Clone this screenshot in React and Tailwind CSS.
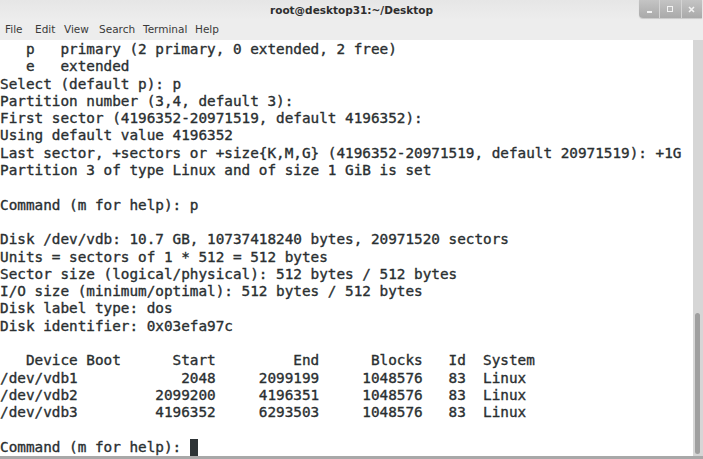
import React from "react";

const lines = [
  "   p   primary (2 primary, 0 extended, 2 free)",
  "   e   extended",
  "Select (default p): p",
  "Partition number (3,4, default 3):",
  "First sector (4196352-20971519, default 4196352):",
  "Using default value 4196352",
  "Last sector, +sectors or +size{K,M,G} (4196352-20971519, default 20971519): +1G",
  "Partition 3 of type Linux and of size 1 GiB is set",
  "",
  "Command (m for help): p",
  "",
  "Disk /dev/vdb: 10.7 GB, 10737418240 bytes, 20971520 sectors",
  "Units = sectors of 1 * 512 = 512 bytes",
  "Sector size (logical/physical): 512 bytes / 512 bytes",
  "I/O size (minimum/optimal): 512 bytes / 512 bytes",
  "Disk label type: dos",
  "Disk identifier: 0x03efa97c",
  "",
  "   Device Boot      Start         End      Blocks   Id  System",
  "/dev/vdb1            2048     2099199     1048576   83  Linux",
  "/dev/vdb2         2099200     4196351     1048576   83  Linux",
  "/dev/vdb3         4196352     6293503     1048576   83  Linux",
  "",
];

const menu = [
  ["File", "w-[30px]"],
  ["Edit", "w-[29px]"],
  ["View", "w-[35px]"],
  ["Search", "w-[44px]"],
  ["Terminal", "w-[52px]"],
  ["Help", "w-[30px]"],
];

export default function App() {
  return (
    <div className="w-[703px] h-[459px] flex flex-col overflow-hidden bg-white">
      {/* title bar */}
      <div className="relative h-[20px] shrink-0 bg-gradient-to-b from-[#e6e6e6] to-[#ededed] flex items-center justify-center">
        <span
          className="text-[10.5px] text-[#2e2e2e] font-bold leading-none"
          style={{ fontFamily: '"DejaVu Sans", sans-serif' }}
        >
          root@desktop31:~/Desktop
        </span>
        <div className="absolute right-[1px] top-0 h-[18px] w-[63px] flex rounded-bl-[4px] overflow-hidden bg-gradient-to-b from-[#c4c4c4] to-[#a9a9a9] shadow-[0_1px_1px_rgba(0,0,0,0.15)]">
          <div className="flex-1 flex items-end justify-center pb-[5px] border-r border-[#d4d4d4]">
            <div className="w-[5px] h-[2px] bg-[#f2f2f2]" />
          </div>
          <div className="flex-1 flex items-center justify-center border-r border-[#d4d4d4]">
            <div className="w-[6px] h-[6px] border-[1.5px] border-[#f2f2f2]" />
          </div>
          <div className="flex-1 flex items-center justify-center">
            <svg width="7" height="7" viewBox="0 0 7 7">
              <path d="M1 1 L6 6 M6 1 L1 6" stroke="#f2f2f2" strokeWidth="1.6" />
            </svg>
          </div>
        </div>
      </div>
      {/* menu bar */}
      <div
        className="h-[20px] shrink-0 bg-[#ededed] flex items-center pl-[5px] text-[10.5px] text-[#3a3a3a]"
        style={{ fontFamily: '"DejaVu Sans", sans-serif' }}
      >
        {menu.map(([m, w]) => (
          <span key={m} className={w}>{m}</span>
        ))}
      </div>
      {/* terminal */}
      <div className="flex-1 flex min-h-0">
        <div className="flex-1 min-w-0 overflow-hidden pt-[1px]">
          <pre
            className="m-0 text-[14.33px] leading-[17.3px] text-[#2a2f31] whitespace-pre [-webkit-text-stroke:0.35px_#2a2f31]"
            style={{ fontFamily: '"DejaVu Sans Mono", monospace' }}
          >
            {lines.map((l, i) => (
              <div key={i} className="h-[17.3px]">{l}</div>
            ))}
            <div className="h-[17.3px] flex">
              <span>Command (m for help): </span>
              <span className="inline-block w-[8.6px] h-[17px] bg-[#2e3436]" />
            </div>
          </pre>
        </div>
        <div className="w-[10px] shrink-0 bg-[#d6d6d6] flex flex-col justify-end pb-[2px] pl-[2px] pr-[3px]">
          <div className="h-[141px] rounded-[3px] bg-[#9f9f9f]" />
        </div>
      </div>
      <div className="h-[3px] shrink-0 bg-[#a8a8a8]" />
    </div>
  );
}
